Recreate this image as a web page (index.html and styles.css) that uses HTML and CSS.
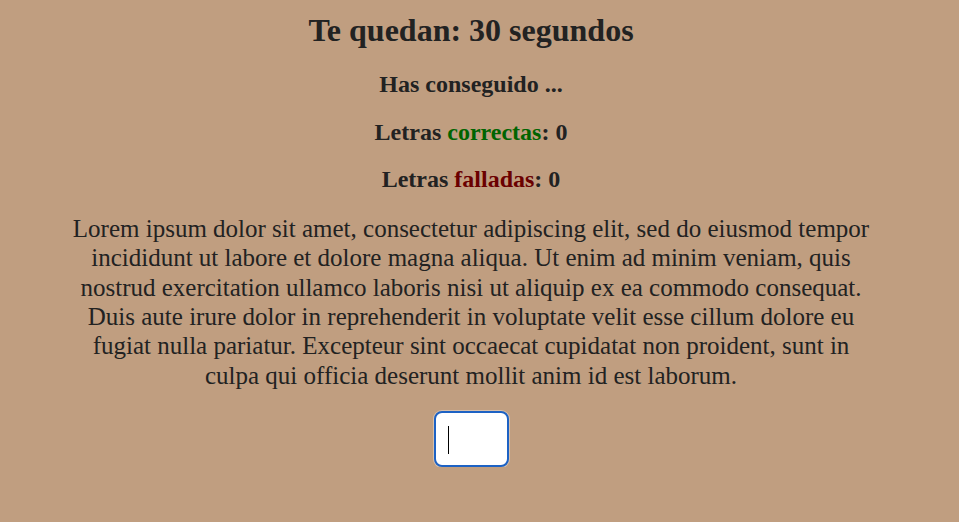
FILE: index.html
```html
<!DOCTYPE html>
<html lang="es">
<head>
<meta charset="utf-8">
<title>Juego de mecanografía</title>
<link rel="stylesheet" href="styles.css">
</head>
<body>
<main class="game">
  <h1 class="timer">Te quedan: 30 segundos</h1>
  <h2 class="stat">Has conseguido ...</h2>
  <h2 class="stat">Letras <span class="ok">correctas</span>: 0</h2>
  <h2 class="stat">Letras <span class="bad">falladas</span>: 0</h2>
  <p class="text">Lorem ipsum dolor sit amet, consectetur adipiscing elit, sed do eiusmod tempor incididunt ut labore et dolore magna aliqua. Ut enim ad minim veniam, quis nostrud exercitation ullamco laboris nisi ut aliquip ex ea commodo consequat. Duis aute irure dolor in reprehenderit in voluptate velit esse cillum dolore eu fugiat nulla pariatur. Excepteur sint occaecat cupidatat non proident, sunt in culpa qui officia deserunt mollit anim id est laborum.</p>
  <span class="entry-wrap">
    <input class="entry" type="text" autofocus>
    <span class="caret"></span>
  </span>
</main>
</body>
</html>
```

FILE: styles.css
```css
html, body {
  margin: 0;
  padding: 0;
  background: #c09e80;
}
body {
  font-family: "Liberation Serif", "Times New Roman", serif;
  color: #222;
}
.game {
  display: flex;
  flex-direction: column;
  align-items: center;
  padding: 12px 17px 0 0;
}
.timer {
  font-size: 32px;
  font-weight: bold;
  margin: 0 0 22px;
  line-height: 37px;
}
.stat {
  font-size: 24px;
  font-weight: bold;
  margin: 0 0 20px;
  line-height: 27.6px;
}
.ok { color: #006400; }
.bad { color: #6b0000; }
.text {
  font-size: 25px;
  line-height: 29.4px;
  text-align: center;
  max-width: 810px;
  margin: 0 0 21px;
}
.entry-wrap {
  position: relative;
  display: block;
}
.entry {
  display: block;
  width: 75px;
  height: 56px;
  box-sizing: border-box;
  border: 2px solid #1d62c4;
  border-radius: 8px;
  background: #fff;
  box-shadow: inset 0 0 0 1px #fff, 0 0 0 1px rgba(255, 255, 255, 0.35);
  outline: none;
  font-size: 24px;
  padding: 0 12px;
  caret-color: #000;
}
.caret {
  position: absolute;
  left: 14px;
  top: 15px;
  width: 1px;
  height: 28px;
  background: #000;
}
```
